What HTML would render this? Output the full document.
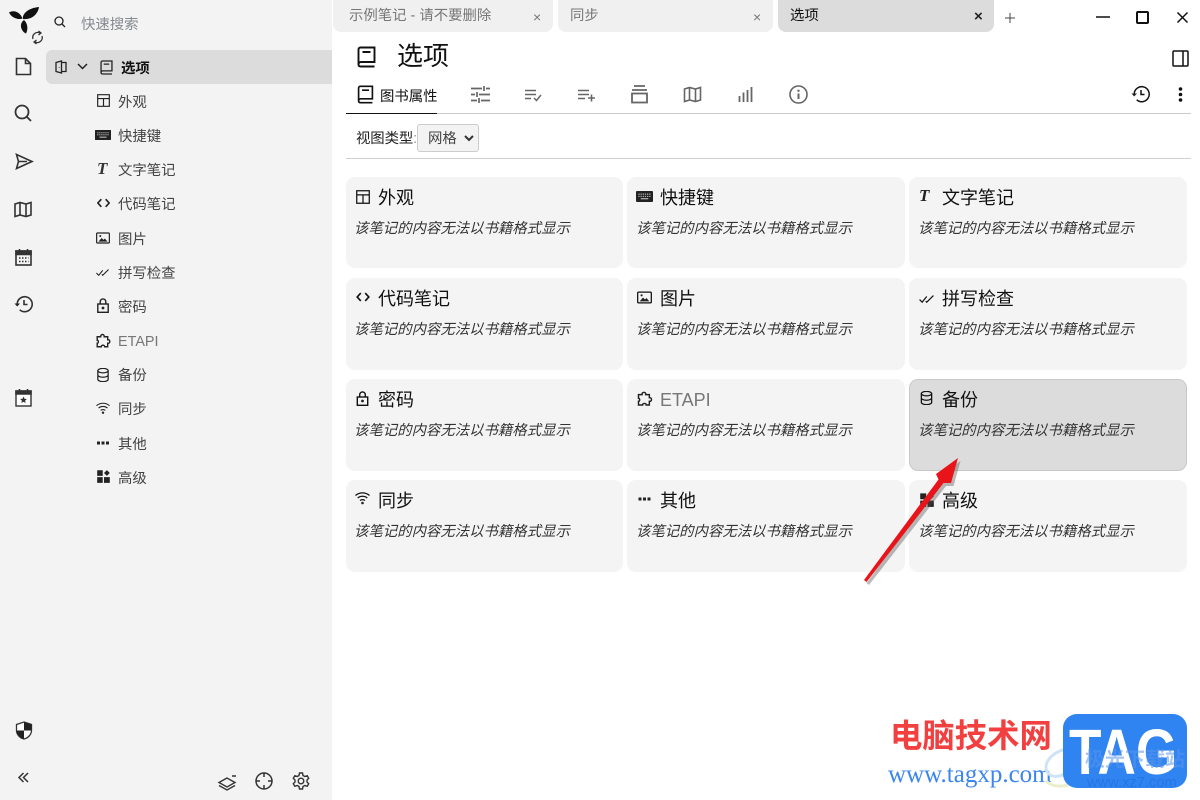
<!DOCTYPE html>
<html lang="zh"><head><meta charset="utf-8"><title>选项</title>
<style>
html,body{margin:0;padding:0;width:1200px;height:800px;overflow:hidden;background:#fff}
body{position:relative;font-family:"Liberation Sans","Noto Sans CJK SC",sans-serif;color:#111}
.a,.t,svg.i{position:absolute}
.t{white-space:nowrap;line-height:20px}
svg.i{fill:none;stroke:#222;stroke-width:1.6;overflow:visible}
#side{left:0;top:0;width:332px;height:800px;background:#f3f3f3}
.tab{top:0;height:32px;border-radius:0 0 8px 8px;background:#f0f0f0}
.s{font-size:14.4px;color:#444;left:118px}
.card{width:277px;height:91px;background:#f4f4f4;border-radius:9px;box-sizing:border-box}
.ct{font-size:18px;color:#111}
.cd{font-size:14.4px;font-style:italic;color:#333}
.wm{font-weight:700}
.Tic{font-family:"Liberation Serif",serif;font-weight:700;font-style:italic}
</style></head><body>
<svg width="0" height="0" style="position:absolute">
<defs>
<symbol id="book" viewBox="0 0 20 22"><path d="M2 18.500V3.500C2 2.300 2.800 1.500 4 1.500h14v14.500H4.500C3 16 2 17 2 18.500S3 20.500 4.500 20.500H18M6 6h8"/></symbol>
<symbol id="layout" viewBox="1.300 1.300 13.400 13.400"><path d="M2 2h12v12H2zM2 6h12M8 6v8" /></symbol>
<symbol id="kbd" viewBox="0 .5 18 11"><rect x=".5" y="1" width="17" height="10" rx="1" fill="#222"/><path d="M2.500 3.500h13M2.500 5.800h13" stroke="#ddd" stroke-width="1" stroke-dasharray="1.300 1"/><path d="M5 8.400h8" stroke="#ddd" stroke-width="1"/></symbol>
<symbol id="code" viewBox="1 2.500 12 9"><path d="M5 3.500 1.800 7 5 10.500M9 3.500 12.200 7 9 10.500"/></symbol>
<symbol id="img" viewBox=".3 .8 15.400 12.400"><rect x="1" y="1.500" width="14" height="11" rx="1"/><path d="M3 11 6.500 7l2 2 1.500-1.500L13 11z" fill="#222" stroke="none"/><circle cx="5" cy="4.800" r="1.100" fill="#222" stroke="none"/></symbol>
<symbol id="check" viewBox=".5 2.500 14.500 7.800"><path d="M1 7l2.500 2.500L8 4M7 8.500l1 1L14.500 3"/></symbol>
<symbol id="lock" viewBox="1 .5 12 15"><rect x="1.800" y="6.500" width="10.400" height="8.300" /><path d="M4.200 6.500V4.200a2.800 2.800 0 0 1 5.600 0v2.300"/><circle cx="7" cy="10.500" r="1.400" fill="#222" stroke="none"/></symbol>
<symbol id="puzzle" viewBox=".8 1 15 14.500"><path d="M2 4.500h3.500C5 1.500 9.500 1.500 9 4.500h3.500V7.500c2.800-.5 2.800 4 0 3.500V14.500H9.500C9.800 12.500 5.700 12.500 6 14.500H2V11c1.500.3 1.500-3.300 0-3z"/></symbol>
<symbol id="db" viewBox="1 .8 12 14.400"><ellipse cx="7" cy="3.500" rx="5.300" ry="2.300"/><path d="M1.700 3.500v9c0 1.300 2.300 2.300 5.300 2.300s5.300-1 5.300-2.300v-9M1.700 8c0 1.300 2.300 2.300 5.300 2.300s5.300-1 5.300-2.300"/></symbol>
<symbol id="wifi" viewBox=".5 1.500 15 12"><path d="M1 4.500c4-3.500 10-3.500 14 0M3.200 7c2.700-2.300 6.900-2.300 9.600 0M5.500 9.500c1.500-1.100 3.500-1.100 5 0"/><circle cx="8" cy="12" r="1.300" fill="#222" stroke="none"/></symbol>
<symbol id="dots" viewBox="1 0 12 4"><path d="M1 .5h3v3H1zM5.500.5h3v3h-3zM10 .5h3v3h-3z" fill="#222" stroke="none"/></symbol>
<symbol id="grid" viewBox=".3 .2 13.400 13.400"><path d="M.5.500h5.700v5.700H.5zM.5 7.500h5.700v6H.5zM7.500 7.500h6v6h-6zM10.500.3l3 3-3 3-3-3z" fill="#222" stroke="none"/></symbol>
<symbol id="hist" viewBox="0 1 19 18"><path d="M3.200 10a7.500 7.500 0 1 1 2.500 5.800M10 6v4.500h3.500"/><path d="M.5 9.500 3.200 12.500 6 9.500z" fill="#222" stroke="none"/></symbol>
</defs></svg>

<div class="a" id="side"></div>
<!-- logo -->
<svg class="i" style="left:8px;top:6px;stroke:none" width="32" height="30" viewBox="0 0 32 30"><path fill="#111" d="M1 6.500C6 3.500 12 6 14.500 12.500 11 14 4 12.500 1 6.500zM15 13C14 8 20 2 31 1c-1 7-7 13-16 12zM16 14c3.500 3 4.500 9 2 13.500-4-1.500-8-9-2-13.500z"/></svg>
<svg class="i" style="left:31px;top:30px;stroke:#333;stroke-width:1.300" width="13" height="15" viewBox="0 0 13 15"><path d="M2 9A5 5 0 0 1 9 3M11 6a5 5 0 0 1-7 6"/><path d="M7.500 1 10 3 7.500 5M5.500 10 3 12l2.500 2"/></svg>
<svg class="i" style="left:54px;top:16px;stroke-width:1.300" width="12" height="12" viewBox="0 0 12 12"><circle cx="5" cy="5" r="4"/><path d="M8 8l3 3"/></svg>
<div class="t" style="left:81px;top:15px;font-size:14.4px;color:#858a90">快速搜索</div>

<!-- launcher -->
<svg class="i" style="left:15px;top:57px;stroke:#333" width="17" height="19" viewBox="0 0 17 19"><path d="M1.500 1.500h9l5 5v11h-14zM10.500 1.500v5h5"/></svg>
<svg class="i" style="left:14px;top:104px;stroke:#333;stroke-width:1.800" width="18" height="18" viewBox="0 0 18 18"><circle cx="8" cy="8" r="6.500"/><path d="M12.500 12.500 17 17"/></svg>
<svg class="i" style="left:15px;top:153px;stroke:#333" width="18" height="17" viewBox="0 0 18 17"><path d="M1.500 1.500 17 8.500 1.500 15.500 3.500 8.500zM3.500 8.500H12"/></svg>
<svg class="i" style="left:14px;top:201px;stroke:#333" width="18" height="17" viewBox="0 0 18 17"><path d="M1 3 6 1.500 12 3 17 1.500v12.500L12 15.500 6 14 1 15.500zM6 1.500V14M12 3v12.500"/></svg>
<svg class="i" style="left:15px;top:248px;stroke:#333" width="17" height="18" viewBox="0 0 17 18"><rect x="1" y="3" width="15" height="14"/><path d="M1 3h15v3.500H1z" fill="#333"/><path d="M4.500 1v3M12.500 1v3"/><path d="M4 10h9.500M4 13.500h9.500" stroke-width="1.400" stroke-dasharray="1.500 1.500"/></svg>
<svg class="i" style="left:14px;top:295px;stroke:#333" width="19" height="18"><use href="#hist" width="19" height="18"/></svg>
<svg class="i" style="left:15px;top:388px;stroke:#333" width="17" height="19" viewBox="0 0 17 19"><rect x="1" y="3" width="15" height="15" fill="#fff" stroke-width="1.400"/><path d="M1 3h15v3H1z" fill="#333"/><path d="M4.500 1v3M12.500 1v3"/><path d="M8.500 8.500l1 2.300 2.400.2-1.800 1.600.6 2.400-2.200-1.300-2.200 1.300.6-2.400L5.100 11l2.400-.2z" fill="#333" stroke="none"/></svg>
<svg class="i" style="left:15px;top:721px;stroke:#333;stroke-width:1.300" width="18" height="19" viewBox="0 0 18 19"><path d="M9 1l7.500 2.500v6c0 4-3.500 7.500-7.500 8.500-4-1-7.500-4.500-7.500-8.500v-6z" fill="#fff"/><path d="M9 1l7.500 2.500V9.500H9zM9 9.500h-7.500c0 4 3.500 7.500 7.500 8.500z" fill="#222" stroke="none"/></svg>
<svg class="i" style="left:18px;top:772px;stroke:#333;stroke-width:1.500" width="11" height="11" viewBox="0 0 11 11"><path d="M5.500 1 1 5.500 5.500 10M10 1 5.500 5.500 10 10"/></svg>
<svg class="i" style="left:218px;top:774px;stroke:#333;stroke-width:1.400" width="19" height="17" viewBox="0 0 19 17"><path d="M9 4 1 8.500 9 13l8-4.500zM1 11.500 9 16l8-4.500M14 2h4"/></svg>
<svg class="i" style="left:255px;top:772px;stroke:#333;stroke-width:1.500" width="18" height="18" viewBox="0 0 18 18"><circle cx="9" cy="9" r="8"/><path d="M9 1v4M9 13v4M1 9h4M13 9h4"/></svg>
<svg class="i" style="left:292px;top:772px;stroke:#333;stroke-width:1.400" width="18" height="18" viewBox="0 0 18 18"><circle cx="9" cy="9" r="2.800"/><path d="M7.500 1h3l.5 2.500 1.800 1 2.400-.8 1.500 2.600L15 8v2l1.700 1.700-1.500 2.600-2.400-.8-1.800 1-.5 2.500h-3L7 14.500l-1.800-1-2.400.8-1.500-2.600L3 10V8L1.300 6.300l1.500-2.600 2.400.8 1.800-1z"/></svg>

<!-- tree -->
<div class="a" style="left:46px;top:50px;width:286px;height:34px;background:#dcdcdc;border-radius:6px 0 0 6px"></div>
<svg class="i" style="left:55px;top:60px;stroke-width:1.300" width="12" height="14" viewBox="0 0 12 14"><path d="M1 2.500 6.500 1v12L1 11.500zM6.500 2.500H11v9H6.500M4.300 7v.5"/></svg>
<svg class="i" style="left:77px;top:63px;stroke-width:1.500" width="11" height="7" viewBox="0 0 11 7"><path d="M1 1l4.500 4.500L10 1"/></svg>
<svg class="i" style="left:99px;top:60px;stroke-width:1.900" width="15" height="15"><use href="#book" width="15" height="15"/></svg>
<div class="t s" style="left:121px;top:59px;color:#111;font-weight:700">选项</div>

<svg class="i" style="left:96.500px;top:94px;stroke-width:1.200" width="13" height="13"><use href="#layout" width="13" height="13"/></svg><div class="t s" style="top:93px">外观</div>
<svg class="i" style="left:95px;top:129.500px" width="16" height="10"><use href="#kbd" width="16" height="10"/></svg><div class="t s" style="top:127px">快捷键</div>
<div class="t Tic" style="left:97px;top:159px;font-size:17px;color:#333">T</div><div class="t s" style="top:161px">文字笔记</div>
<svg class="i" style="left:96.500px;top:198px;stroke-width:1.500" width="13" height="10"><use href="#code" width="13" height="10"/></svg><div class="t s" style="top:195px">代码笔记</div>
<svg class="i" style="left:96px;top:232px;stroke-width:1.300" width="14" height="12"><use href="#img" width="14" height="12"/></svg><div class="t s" style="top:230px">图片</div>
<svg class="i" style="left:96px;top:269px;stroke-width:1.200" width="13" height="7"><use href="#check" width="13" height="7"/></svg><div class="t s" style="top:264px">拼写检查</div>
<svg class="i" style="left:97px;top:298px;stroke-width:1.400" width="12" height="15"><use href="#lock" width="12" height="15"/></svg><div class="t s" style="top:298px">密码</div>
<svg class="i" style="left:96px;top:333px;stroke-width:1.400" width="15" height="15"><use href="#puzzle" width="15" height="15"/></svg><div class="t s" style="top:332px;color:#777">ETAPI</div>
<svg class="i" style="left:97px;top:368px;stroke-width:1.300" width="12" height="14"><use href="#db" width="12" height="14"/></svg><div class="t s" style="top:366px">备份</div>
<svg class="i" style="left:96px;top:402px;stroke-width:1.200" width="14" height="13"><use href="#wifi" width="14" height="13"/></svg><div class="t s" style="top:400px">同步</div>
<svg class="i" style="left:97px;top:441px" width="12" height="4"><use href="#dots" width="12" height="4"/></svg><div class="t s" style="top:435px">其他</div>
<svg class="i" style="left:97px;top:470px" width="13" height="13"><use href="#grid" width="13" height="13"/></svg><div class="t s" style="top:469px">高级</div>

<!-- tabs -->
<div class="a tab" style="left:333px;width:220px"></div>
<div class="t" style="left:349px;top:6px;font-size:14.4px;color:#777">示例笔记 - 请不要删除</div>
<div class="t" style="left:533px;top:7px;font-size:14px;color:#777">×</div>
<div class="a tab" style="left:558px;width:215px"></div>
<div class="t" style="left:570px;top:6px;font-size:14.4px;color:#777">同步</div>
<div class="t" style="left:753px;top:7px;font-size:14px;color:#777">×</div>
<div class="a tab" style="left:778px;width:216px;background:#dcdcdc"></div>
<div class="t" style="left:790px;top:6px;font-size:14.4px;color:#111">选项</div>
<div class="t" style="left:974px;top:7px;font-size:15px;font-weight:700;color:#222">×</div>
<svg class="i" style="left:1005px;top:13px;stroke-width:1;stroke:#444" width="10" height="10" viewBox="0 0 10 10"><path d="M5 0v10M0 5h10"/></svg>
<svg class="i" style="left:1096px;top:16px;stroke:#111;stroke-width:1.500" width="14" height="2"><path d="M0 1h14"/></svg>
<svg class="i" style="left:1136px;top:11px;stroke:#111;stroke-width:2" width="13" height="13" viewBox="0 0 13 13"><rect x="1" y="1" width="11" height="11" rx="1"/></svg>
<svg class="i" style="left:1177px;top:12px;stroke:#111;stroke-width:1.500" width="11" height="11" viewBox="0 0 11 11"><path d="M.5.500l10 10M10.500.500l-10 10"/></svg>

<!-- title -->
<svg class="i" style="left:356px;top:46px;stroke:#111;stroke-width:1.900" width="21" height="22"><use href="#book" width="21" height="22"/></svg>
<div class="t" style="left:397px;top:40px;font-size:26px;line-height:32px;color:#111">选项</div>
<svg class="i" style="left:1172px;top:50px;stroke:#111;stroke-width:1.500" width="17" height="17" viewBox="0 0 17 17"><rect x="1" y="1" width="15" height="15" rx="1"/><path d="M11 1v15"/></svg>

<!-- ribbon -->
<svg class="i" style="left:356px;top:85px;stroke:#111;stroke-width:1.900" width="19" height="19"><use href="#book" width="19" height="19"/></svg>
<div class="t" style="left:380px;top:87px;font-size:14.4px;color:#111">图书属性</div>
<div class="a" style="left:346px;top:113px;width:845px;height:1px;background:#ccc"></div>
<div class="a" style="left:346px;top:113px;width:91px;height:1px;background:#111"></div>
<svg class="i" style="left:471px;top:86px;stroke:#666;stroke-width:1.700" width="19" height="17" viewBox="0 0 19 17"><path d="M0 2.500h11M15 2.500h4M13 0v5M0 8.500h4M8 8.500h11M6 6v5M0 14.500h6M10 14.500h9M8 12v5" /></svg>
<svg class="i" style="left:525px;top:89px;stroke:#666;stroke-width:1.500" width="17" height="13" viewBox="0 0 17 13"><path d="M0 1.500h11M0 5.500h11M0 9.500h6M9 9l2.500 2.500L16 6"/></svg>
<svg class="i" style="left:578px;top:89px;stroke:#666;stroke-width:1.600" width="18" height="13" viewBox="0 0 18 13"><path d="M0 1.500h11M0 5.500h11M0 9.500h7M13.500 5.500v7M10 9h7"/></svg>
<svg class="i" style="left:631px;top:85px;stroke:#666;stroke-width:1.800" width="17" height="19" viewBox="0 0 17 19"><path d="M3 1h11M1 5h15"/><rect x="1" y="8.500" width="15" height="9"/></svg>
<svg class="i" style="left:683px;top:86px;stroke:#666;stroke-width:1.600" width="19" height="17" viewBox="0 0 18 17"><path d="M1 3 6 1.500 12 3 17 1.500v12.500L12 15.500 6 14 1 15.500zM6 1.500V14M12 3v12.500"/></svg>
<svg class="i" style="left:738px;top:87px;stroke:#666;stroke-width:1.800" width="15" height="15" viewBox="0 0 15 15"><path d="M1.500 15V9M5.500 15V5.500M9.500 15V3M13.500 15V0"/></svg>
<svg class="i" style="left:789px;top:85px;stroke:#666;stroke-width:1.600" width="19" height="19" viewBox="0 0 19 19"><circle cx="9.500" cy="9.500" r="8.500"/><path d="M9.500 8.500v5.500" stroke-width="2"/><circle cx="9.500" cy="5.800" r="1.200" fill="#666" stroke="none"/></svg>
<svg class="i" style="left:1131px;top:85px;stroke:#111;stroke-width:1.500" width="19" height="18"><use href="#hist" width="19" height="18"/></svg>
<svg class="i" style="left:1178px;top:87px;stroke:none" width="5" height="15" viewBox="0 0 5 15"><circle cx="2.500" cy="2" r="1.800" fill="#111"/><circle cx="2.500" cy="7.500" r="1.800" fill="#111"/><circle cx="2.500" cy="13" r="1.800" fill="#111"/></svg>

<!-- view type -->
<div class="t" style="left:356px;top:129px;font-size:14.4px;letter-spacing:-.1px;color:#222">视图类型<span style="color:#999">:</span></div>
<div class="a" style="left:417px;top:124px;width:62px;height:28px;box-sizing:border-box;background:#f3f3f3;border:1px solid #ccc;border-radius:3px"></div>
<div class="t" style="left:428px;top:129px;font-size:14.4px;color:#444">网格</div>
<svg class="i" style="left:464px;top:135px;stroke:#333;stroke-width:2" width="10" height="7" viewBox="0 0 10 7"><path d="M1 1l4 4 4-4"/></svg>
<div class="a" style="left:346px;top:158px;width:845px;height:1px;background:#d0d0d0"></div>

<!-- cards -->
<div class="a card" style="left:346px;top:177px"></div>
<div class="a card" style="left:627px;top:177px;width:278px"></div>
<div class="a card" style="left:909px;top:177px;width:278px"></div>
<div class="a card" style="left:346px;top:278px;height:92px"></div>
<div class="a card" style="left:627px;top:278px;height:92px;width:278px"></div>
<div class="a card" style="left:909px;top:278px;height:92px;width:278px"></div>
<div class="a card" style="left:346px;top:379px;height:92px"></div>
<div class="a card" style="left:627px;top:379px;height:92px;width:278px"></div>
<div class="a card" style="left:909px;top:379px;height:92px;width:278px;background:#dcdcdc;border:1px solid #c8c8c8"></div>
<div class="a card" style="left:346px;top:480px;height:92px"></div>
<div class="a card" style="left:627px;top:480px;height:92px;width:278px"></div>
<div class="a card" style="left:909px;top:480px;height:92px;width:278px"></div>

<svg class="i" style="left:356px;top:190px;stroke:#111;stroke-width:1.200" width="14" height="14"><use href="#layout" width="14" height="14"/></svg><div class="t ct" style="left:378px;top:188px">外观</div><div class="t cd" style="left:354px;top:219px">该笔记的内容无法以书籍格式显示</div>
<svg class="i" style="left:636px;top:191px" width="17" height="11"><use href="#kbd" width="17" height="11"/></svg><div class="t ct" style="left:660px;top:188px">快捷键</div><div class="t cd" style="left:636px;top:219px">该笔记的内容无法以书籍格式显示</div>
<div class="t Tic" style="left:919px;top:186px;font-size:17px;color:#222">T</div><div class="t ct" style="left:942px;top:188px">文字笔记</div><div class="t cd" style="left:918px;top:219px">该笔记的内容无法以书籍格式显示</div>

<svg class="i" style="left:356px;top:292px;stroke:#111;stroke-width:1.500" width="14" height="10"><use href="#code" width="14" height="10"/></svg><div class="t ct" style="left:378px;top:289px">代码笔记</div><div class="t cd" style="left:354px;top:320px">该笔记的内容无法以书籍格式显示</div>
<svg class="i" style="left:637px;top:291px;stroke:#111;stroke-width:1.300" width="15" height="13"><use href="#img" width="15" height="13"/></svg><div class="t ct" style="left:660px;top:289px">图片</div><div class="t cd" style="left:636px;top:320px">该笔记的内容无法以书籍格式显示</div>
<svg class="i" style="left:919px;top:295px;stroke:#111;stroke-width:1.200" width="15" height="8"><use href="#check" width="15" height="8"/></svg><div class="t ct" style="left:942px;top:289px">拼写检查</div><div class="t cd" style="left:918px;top:320px">该笔记的内容无法以书籍格式显示</div>

<svg class="i" style="left:356px;top:391px;stroke:#111;stroke-width:1.400" width="13" height="15"><use href="#lock" width="13" height="15"/></svg><div class="t ct" style="left:378px;top:390px">密码</div><div class="t cd" style="left:354px;top:421px">该笔记的内容无法以书籍格式显示</div>
<svg class="i" style="left:637px;top:391px;stroke-width:1.400" width="16" height="15"><use href="#puzzle" width="16" height="15"/></svg><div class="t ct" style="left:660px;top:390px;color:#777">ETAPI</div><div class="t cd" style="left:636px;top:421px">该笔记的内容无法以书籍格式显示</div>
<svg class="i" style="left:920px;top:391px;stroke:#111;stroke-width:1.300" width="13" height="14"><use href="#db" width="13" height="14"/></svg><div class="t ct" style="left:942px;top:390px">备份</div><div class="t cd" style="left:918px;top:421px">该笔记的内容无法以书籍格式显示</div>

<svg class="i" style="left:355px;top:492px;stroke:#111;stroke-width:1.200" width="15" height="13"><use href="#wifi" width="15" height="13"/></svg><div class="t ct" style="left:378px;top:491px">同步</div><div class="t cd" style="left:354px;top:522px">该笔记的内容无法以书籍格式显示</div>
<svg class="i" style="left:638px;top:497px" width="13" height="4"><use href="#dots" width="13" height="4"/></svg><div class="t ct" style="left:660px;top:491px">其他</div><div class="t cd" style="left:636px;top:522px">该笔记的内容无法以书籍格式显示</div>
<svg class="i" style="left:920px;top:493px" width="14" height="14"><use href="#grid" width="14" height="14"/></svg><div class="t ct" style="left:942px;top:491px">高级</div><div class="t cd" style="left:918px;top:522px">该笔记的内容无法以书籍格式显示</div>

<!-- arrow -->
<svg class="a" style="left:855px;top:450px" width="115" height="140" viewBox="0 0 115 140">
<path d="M9 130 83.500 29.500 81 24 103 8 96 33 88.500 33 11.500 132z" fill="#555" opacity=".4" transform="translate(2.500 3)"/>
<path d="M9 130 83.500 29.500 81 24 103 8 96 33 88.500 33 11.500 132z" fill="#e8141a"/>
</svg>

<!-- watermark -->
<div class="t wm" style="left:890px;top:718px;font-size:32.400px;line-height:36px;color:#f24040">电脑技术网</div>
<div class="t" style="left:888px;top:762px;font-size:25px;line-height:26px;font-family:'Liberation Serif',serif;color:#3a85ee">www.tagxp.com</div>
<svg class="a" style="left:1040px;top:745px" width="40" height="50" viewBox="0 0 40 50"><path d="M26 4C10 8 2 20 8 28c4 5 12 4 18 0" fill="none" stroke="#cfe3f7" stroke-width="3"/><path d="M6 36c6 6 14 6 22 4" fill="none" stroke="#e9eecb" stroke-width="3"/></svg>
<div class="a" style="left:1063px;top:714px;width:124px;height:74px;background:#2f84f2;border-radius:14px"></div>
<div class="t" style="left:1069px;top:716px;font-size:64px;line-height:72px;font-weight:700;color:#fff;transform:scaleX(.83);transform-origin:0 0">TAG</div>
<div class="t" style="left:1085px;top:750px;font-size:20px;color:rgba(90,150,235,.55);font-weight:700">极光下载站</div>
<div class="t" style="left:1087px;top:773px;font-size:14.700px;color:#2676e2">www.xz7.com</div>
</body></html>
